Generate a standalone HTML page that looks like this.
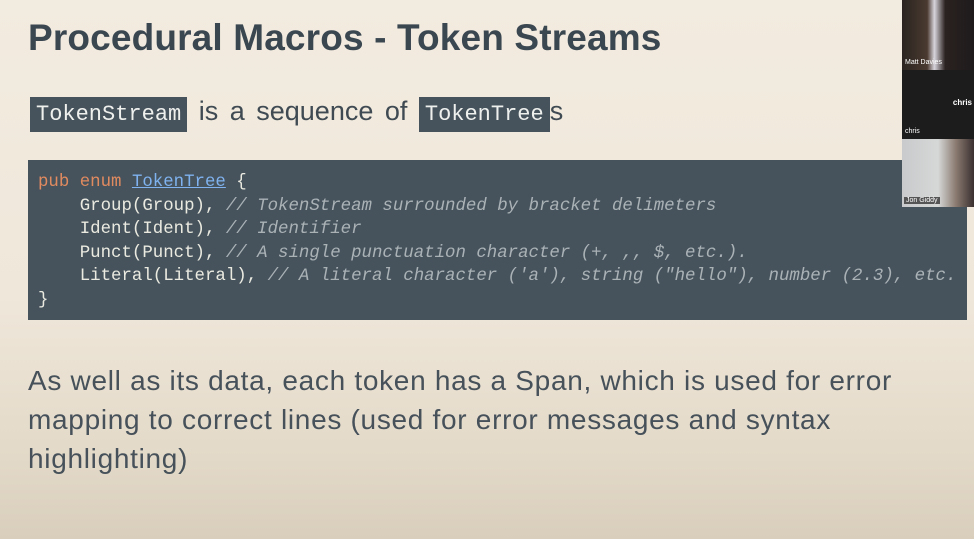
<!DOCTYPE html>
<html><head><style>
*{margin:0;padding:0;box-sizing:border-box}
body{width:974px;height:539px;overflow:hidden;position:relative;font-family:"Liberation Sans",sans-serif;
background:linear-gradient(180deg,#f2ebdf 0%,#efe7da 55%,#e3d9c8 85%,#d9cebc 100%);color:#3f4a52}
.t{position:absolute;left:28px;top:17px;font-size:37px;font-weight:bold;color:#3a4650;letter-spacing:0.15px}
.s{position:absolute;left:30px;top:96px;font-size:27px;color:#3f4a52;word-spacing:4px}
.c{display:inline-block;background:#47535c;color:#eef0ee;font-family:"Liberation Mono",monospace;font-size:22px;padding:5px 6px;word-spacing:0;line-height:25px}
.code{position:absolute;left:28px;top:160px;width:939px;height:160px;background:#46535d;
font-family:"Liberation Mono",monospace;font-size:17.4px;line-height:23.5px;color:#eaeae0;padding:11px 0 0 10px;white-space:pre}
.k{color:#e08a5f}.u{color:#7fb2ee;text-decoration:underline}.cm{color:#aab2b6;font-style:italic}
.p{position:absolute;left:28px;top:361px;font-size:28px;line-height:39px;color:#46515a;width:900px;letter-spacing:0.7px}
.cam{position:absolute;left:902px;width:72px;font-size:7px;color:#fff}
</style></head><body>
<div class="t">Procedural Macros - Token Streams</div>
<div class="s"><span class="c">TokenStream</span> is a sequence of <span class="c">TokenTree</span>s</div>
<div class="code"><span class="k">pub enum</span> <span class="u">TokenTree</span> {
    Group(Group), <span class="cm">// TokenStream surrounded by bracket delimeters</span>
    Ident(Ident), <span class="cm">// Identifier</span>
    Punct(Punct), <span class="cm">// A single punctuation character (+, ,, $, etc.).</span>
    Literal(Literal), <span class="cm">// A literal character ('a'), string ("hello"), number (2.3), etc.</span>
}</div>
<div class="p">As well as its data, each token has a Span, which is used for error<br>mapping to correct lines (used for error messages and syntax<br>highlighting)</div>
<div class="cam" style="top:0;height:70px;background:linear-gradient(90deg,#2a2420 0%,#4a3a30 35%,#d8d4dc 45%,#2a2220 60%,#1e1a1c 100%)"><span style="position:absolute;left:3px;top:59px">Matt Davies</span></div>
<div class="cam" style="top:70px;height:69px;background:#1c1c1c"><span style="position:absolute;right:2px;top:28px;font-size:8px;font-weight:bold">chris</span><span style="position:absolute;left:3px;top:58px">chris</span></div>
<div class="cam" style="top:139px;height:68px;background:linear-gradient(90deg,#c8cacb 0%,#d6d8d8 50%,#8a7a70 75%,#3a3030 100%)"><span style="position:absolute;left:2px;top:58px;background:#555;padding:0 2px">Jon Giddy</span></div>
</body></html>
